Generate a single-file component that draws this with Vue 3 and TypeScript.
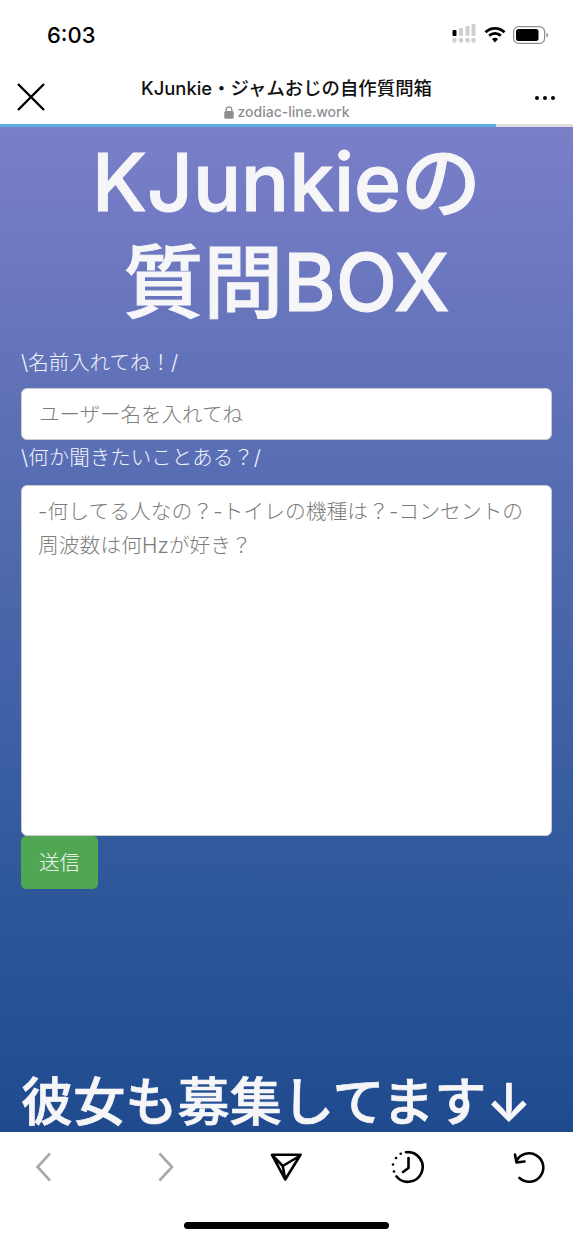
<script setup lang="ts">
const title = 'KJunkie・ジャムおじの自作質問箱'
</script>

<template>
  <div class="phone">
    <header class="status">
      <span class="time">6:03</span>
      <div class="status-icons">
        <svg class="signal" width="24" height="19" viewBox="0 0 24 19">
          <g fill="#cfcfcf">
            <rect x="7" y="4" width="4" height="8" rx="1" />
            <rect x="13.500" y="2" width="4" height="10" rx="1" />
            <rect x="19.500" y="0" width="4" height="12" rx="1" />
            <rect x="0.500" y="14" width="4" height="4.500" rx="1" />
            <rect x="7" y="14" width="4" height="4.500" rx="1" />
            <rect x="13.500" y="14" width="4" height="4.500" rx="1" />
            <rect x="19.500" y="14" width="4" height="4.500" rx="1" />
          </g>
          <rect x="0.500" y="6" width="4" height="6" rx="1" fill="#000" />
        </svg>
        <svg width="22" height="17" viewBox="0 0 22 17">
          <path d="M1.500 6.200a13.500 13.500 0 0 1 19 0" fill="none" stroke="#000" stroke-width="2.800" />
          <path d="M5.200 9.800a8.300 8.300 0 0 1 11.600 0" fill="none" stroke="#000" stroke-width="2.800" />
          <path d="M8 13a4.200 4.200 0 0 1 6 0l-3 3.600z" fill="#000" />
        </svg>
        <svg width="36" height="18" viewBox="0 0 36 18">
          <rect x="0.600" y="0.600" width="31" height="16.800" rx="5" fill="none" stroke="#8f8f8f" stroke-width="1.200" />
          <rect x="3" y="3" width="22.500" height="12" rx="2.500" fill="#000" />
          <path d="M33.500 6.500c1.200.5 1.600 1.400 1.600 2.500s-.4 2-1.600 2.500z" fill="#8f8f8f" />
        </svg>
      </div>
    </header>

    <nav class="nav">
      <svg class="close" width="30" height="30" viewBox="0 0 30 30">
        <path d="M2 2l26 26M28 2L2 28" fill="none" stroke="#000" stroke-width="2.400" />
      </svg>
      <div class="nav-title">
        <div class="title">{{ title }}</div>
        <div class="host">
          <svg width="10" height="13" viewBox="0 0 10 13">
            <path d="M2.200 6V3.600a2.800 2.800 0 0 1 5.600 0V6" fill="none" stroke="#8e8e8e" stroke-width="1.300" />
            <rect x="0.300" y="5" width="9.400" height="7.800" rx="1.600" fill="#8e8e8e" />
          </svg>
          <span>zodiac-line.work</span>
        </div>
      </div>
      <div class="more"><i></i><i></i><i></i></div>
    </nav>
    <div class="progress"><div class="progress-fill"></div></div>

    <main class="page">
      <h1>KJunkieの<br />質問BOX</h1>
      <label class="field-label">\名前入れてね！/</label>
      <input class="control name" type="text" placeholder="ユーザー名を入れてね" />
      <label class="field-label second">\何か聞きたいことある？/</label>
      <textarea class="control message" placeholder="-何してる人なの？-トイレの機種は？-コンセントの周波数は何Hzが好き？"></textarea>
      <button class="send" type="button">送信</button>
      <div class="spacer"></div>
      <h2>彼女も募集してます↓</h2>
    </main>

    <footer class="toolbar">
      <div class="tools">
        <svg width="34" height="34" viewBox="0 0 34 34">
          <path d="M24 3.500L11.500 17L24 30.500" fill="none" stroke="#a9a9a9" stroke-width="2.600" />
        </svg>
        <svg width="34" height="34" viewBox="0 0 34 34">
          <path d="M11.500 3.500L24 17L11.500 30.500" fill="none" stroke="#a9a9a9" stroke-width="2.600" />
        </svg>
        <svg width="34" height="34" viewBox="0 0 34 34">
          <path d="M3 4.800H31.500L16.200 29.500ZM3 4.800L13.800 16L30.500 6M13.800 16L16.200 29.500" fill="none" stroke="#000" stroke-width="2.600" stroke-linejoin="round" />
        </svg>
        <svg width="34" height="34" viewBox="0 0 34 34">
          <path d="M15 2.300A14.800 14.800 0 1 1 5.500 26.500" fill="none" stroke="#000" stroke-width="2.600" stroke-linecap="round" />
          <path d="M17.500 8V18L12 22" fill="none" stroke="#000" stroke-width="2.600" stroke-linecap="round" stroke-linejoin="round" />
          <g fill="#000">
            <circle cx="9.700" cy="3.800" r="1.300" />
            <circle cx="5" cy="8" r="1.300" />
            <circle cx="2" cy="14.500" r="1.300" />
            <circle cx="3" cy="21.500" r="1.300" />
          </g>
        </svg>
        <svg width="34" height="34" viewBox="0 0 34 34">
          <path d="M4.500 11A14.200 14.200 0 1 1 7.500 28" fill="none" stroke="#000" stroke-width="2.600" stroke-linecap="round" />
          <path d="M3 4.500L4.500 12.500L12.500 11.500" fill="none" stroke="#000" stroke-width="2.600" stroke-linecap="round" stroke-linejoin="round" />
        </svg>
      </div>
      <div class="home-bar"></div>
    </footer>
  </div>
</template>

<style scoped>
.phone {
  width: 573px;
  height: 1240px;
  display: flex;
  flex-direction: column;
  background: #fff;
  font-family: Inter, "Noto Sans CJK JP", sans-serif;
}
.status {
  height: 65px;
  flex: none;
  display: flex;
  align-items: center;
  justify-content: space-between;
  padding: 4px 24px 0 47px;
  box-sizing: border-box;
}
.time {
  font-size: 22px;
  font-weight: 500;
  color: #000;
}
.status-icons {
  display: flex;
  align-items: center;
  gap: 7px;
}
.signal {
  margin: 0 1px 2px 0;
}
.nav {
  height: 59px;
  flex: none;
  display: flex;
  align-items: flex-start;
  justify-content: space-between;
  padding: 0 18px 0 16px;
  box-sizing: border-box;
  position: relative;
}
.close {
  margin-top: 17px;
}
.nav-title {
  position: absolute;
  left: 0;
  right: 0;
  top: 11px;
  text-align: center;
}
.title {
  font-size: 18.400px;
  font-weight: 500;
  line-height: 24px;
  color: #111;
}
.host {
  display: flex;
  align-items: center;
  justify-content: center;
  gap: 4px;
  font-size: 14px;
  font-weight: 500;
  line-height: 20px;
  color: #8e8e93;
  margin-top: 2px;
}
.more {
  margin-top: 31px;
  display: flex;
  gap: 4px;
}
.more i {
  width: 4px;
  height: 4px;
  border-radius: 50%;
  background: #000;
}
.progress {
  height: 3px;
  flex: none;
  background: #dedede;
}
.progress-fill {
  width: 496px;
  height: 100%;
  background: #5aaee0;
}
.page {
  flex: 1;
  min-height: 0;
  display: flex;
  flex-direction: column;
  padding: 0 21px;
  background: linear-gradient(180deg, #7a7fc8 0%, #2f589b 75%, #1f4b8e 100%);
  color: #f5f5f5;
}
h1 {
  margin: 5px -10px 0;
  font-size: 80px;
  font-weight: 500;
  line-height: 100px;
  text-align: center;
  color: #f6f6f8;
  -webkit-text-stroke: 1px #f6f6f8;
}
.field-label {
  display: block;
  font-size: 20.500px;
  line-height: 29px;
  margin-top: 16px;
  color: #f2f4fb;
  font-weight: 300;
}
.field-label.second {
  margin-top: 3px;
}
.control {
  display: block;
  width: 100%;
  box-sizing: border-box;
  border: 1px solid #ccc;
  border-radius: 6px;
  background: #fff;
  font-family: inherit;
  font-size: 20.500px;
  font-weight: 300;
  color: #333;
  outline: none;
}
.control::placeholder {
  color: #7c7c7c;
  opacity: 1;
}
.name {
  height: 52px;
  margin-top: 11px;
  padding: 0 17px;
}
.message {
  height: 351px;
  margin-top: 13px;
  padding: 9px 16px;
  font-size: 20.800px;
  line-height: 34px;
  resize: none;
}
.send {
  align-self: flex-start;
  width: 77px;
  height: 53px;
  margin-top: 0;
  padding: 0 0 3px;
  border: none;
  border-radius: 5px;
  background: #50a653;
  color: #f2f8f2;
  font-family: inherit;
  font-size: 20.500px;
  font-weight: 300;
}
.spacer {
  flex: 1;
}
h2 {
  margin: 0;
  font-size: 52.200px;
  font-weight: 500;
  line-height: 60px;
  white-space: nowrap;
  color: #f6f6f8;
  -webkit-text-stroke: 0.7px #f6f6f8;
}
.toolbar {
  height: 108px;
  flex: none;
  background: #fff;
  box-sizing: border-box;
  position: relative;
}
.tools {
  display: flex;
  justify-content: space-between;
  padding: 18px 27px 0 26px;
}
.home-bar {
  position: absolute;
  left: 184px;
  top: 90px;
  width: 205px;
  height: 7px;
  border-radius: 4px;
  background: #000;
}
</style>
